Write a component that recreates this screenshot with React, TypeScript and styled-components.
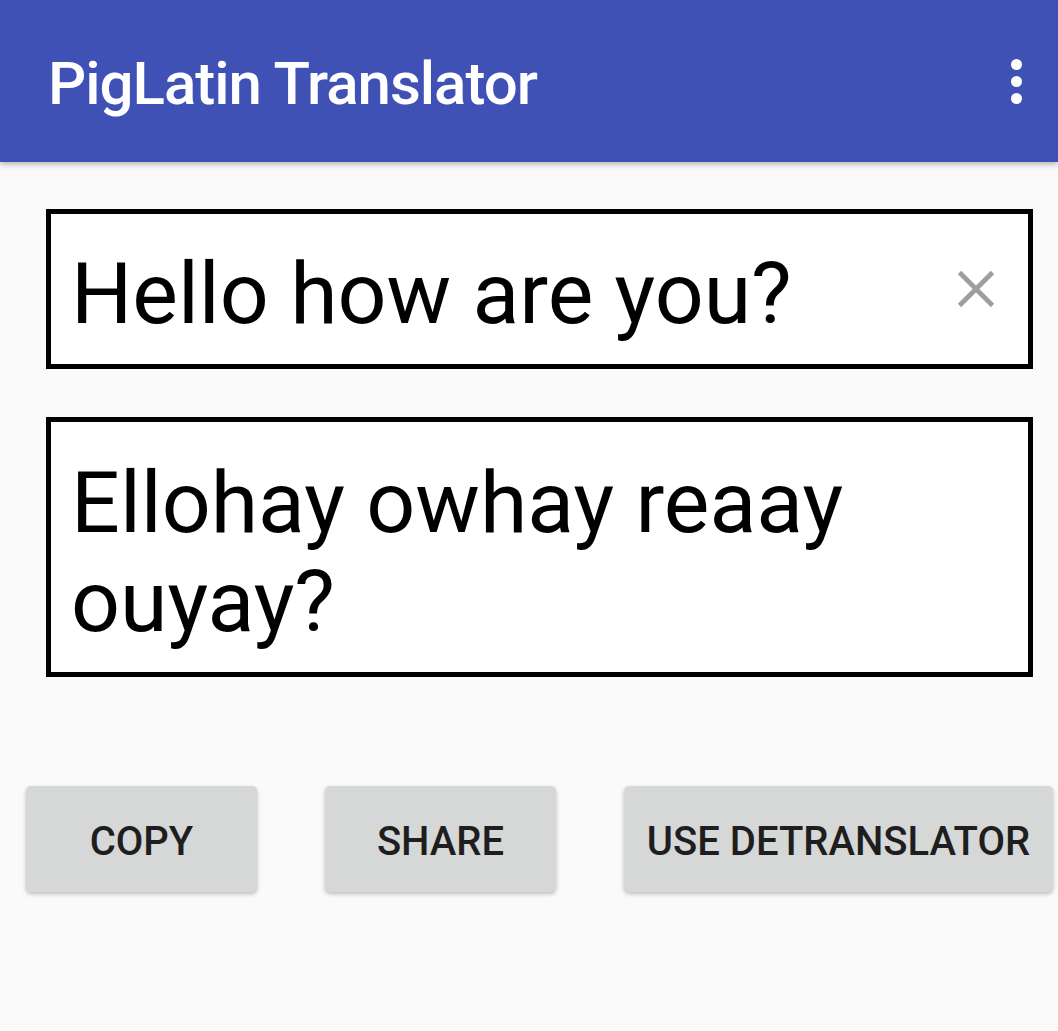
import React from "react";
import styled, { createGlobalStyle } from "styled-components";

const Global = createGlobalStyle`
  html, body { margin: 0; padding: 0; background: #fafafa; }
  body { font-family: Roboto, "Noto Sans", sans-serif; }
`;

const Screen = styled.div`
  width: 1058px;
  height: 1031px;
  background: #fafafa;
  overflow: hidden;
  display: flex;
  flex-direction: column;
`;

const AppBar = styled.header`
  height: 162px;
  flex: none;
  background: #3f51b5;
  box-shadow: 0 2px 6px rgba(0, 0, 0, 0.3);
  display: flex;
  align-items: center;
  justify-content: space-between;
  padding: 0 30px 0 48px;
  box-sizing: border-box;
  position: relative;
  z-index: 1;
`;

const Title = styled.h1`
  margin: 0;
  padding-top: 6px;
  color: #fff;
  font-family: Roboto, sans-serif;
  font-weight: 500;
  font-size: 60px;
  letter-spacing: -1px;
  line-height: 1;
`;

const Overflow = styled.div`
  display: flex;
  flex-direction: column;
  gap: 6px;
  padding: 0 6px;
`;

const Dot = styled.span`
  width: 11px;
  height: 11px;
  border-radius: 50%;
  background: #fff;
`;

const Content = styled.main`
  display: flex;
  flex-direction: column;
  padding: 47px 25px 0 46px;
  gap: 48px;
`;

const Field = styled.div<{ $h: number }>`
  height: ${(p) => p.$h}px;
  box-sizing: border-box;
  border: 5px solid #000;
  background: #fff;
  display: flex;
  align-items: ${(p) => (p.$h > 200 ? "flex-start" : "center")};
  padding: 0 30px 0 20px;
`;

const FieldText = styled.div`
  flex: 1;
  font-family: Roboto, sans-serif;
  font-size: 86px;
  line-height: 99px;
  color: #000;
  padding-top: 8px;
`;

const OutText = styled(FieldText)`
  padding-top: 31px;
`;

const Clear = styled.svg`
  width: 44px;
  height: 44px;
  flex: none;
`;

const ButtonRow = styled.div`
  display: flex;
  gap: 68px;
  padding-left: 26px;
  margin-top: 109px;
`;

const Button = styled.button<{ $w: number }>`
  width: ${(p) => p.$w}px;
  height: 106px;
  border: none;
  border-radius: 5px;
  background: #d6d7d7;
  box-shadow: 0 2px 4px rgba(0, 0, 0, 0.25);
  font-family: Roboto, sans-serif;
  font-weight: 500;
  font-size: 40px;
  color: #1e1e1e;
  text-transform: uppercase;
  padding: 4px 0 0;
  display: flex;
  align-items: center;
  justify-content: center;
`;

export default function App() {
  return (
    <Screen>
      <Global />
      <AppBar>
        <Title>PigLatin Translator</Title>
        <Overflow>
          <Dot />
          <Dot />
          <Dot />
        </Overflow>
      </AppBar>
      <Content>
        <Field $h={160}>
          <FieldText>Hello how are you?</FieldText>
          <Clear viewBox="0 0 24 24">
            <path
              d="M3 3 L21 21 M21 3 L3 21"
              stroke="#9e9e9e"
              strokeWidth="2.6"
              fill="none"
            />
          </Clear>
        </Field>
        <Field $h={260}>
          <OutText>Ellohay owhay reaay ouyay?</OutText>
        </Field>
      </Content>
      <ButtonRow>
        <Button $w={231}>Copy</Button>
        <Button $w={231}>Share</Button>
        <Button $w={429}>Use Detranslator</Button>
      </ButtonRow>
    </Screen>
  );
}
